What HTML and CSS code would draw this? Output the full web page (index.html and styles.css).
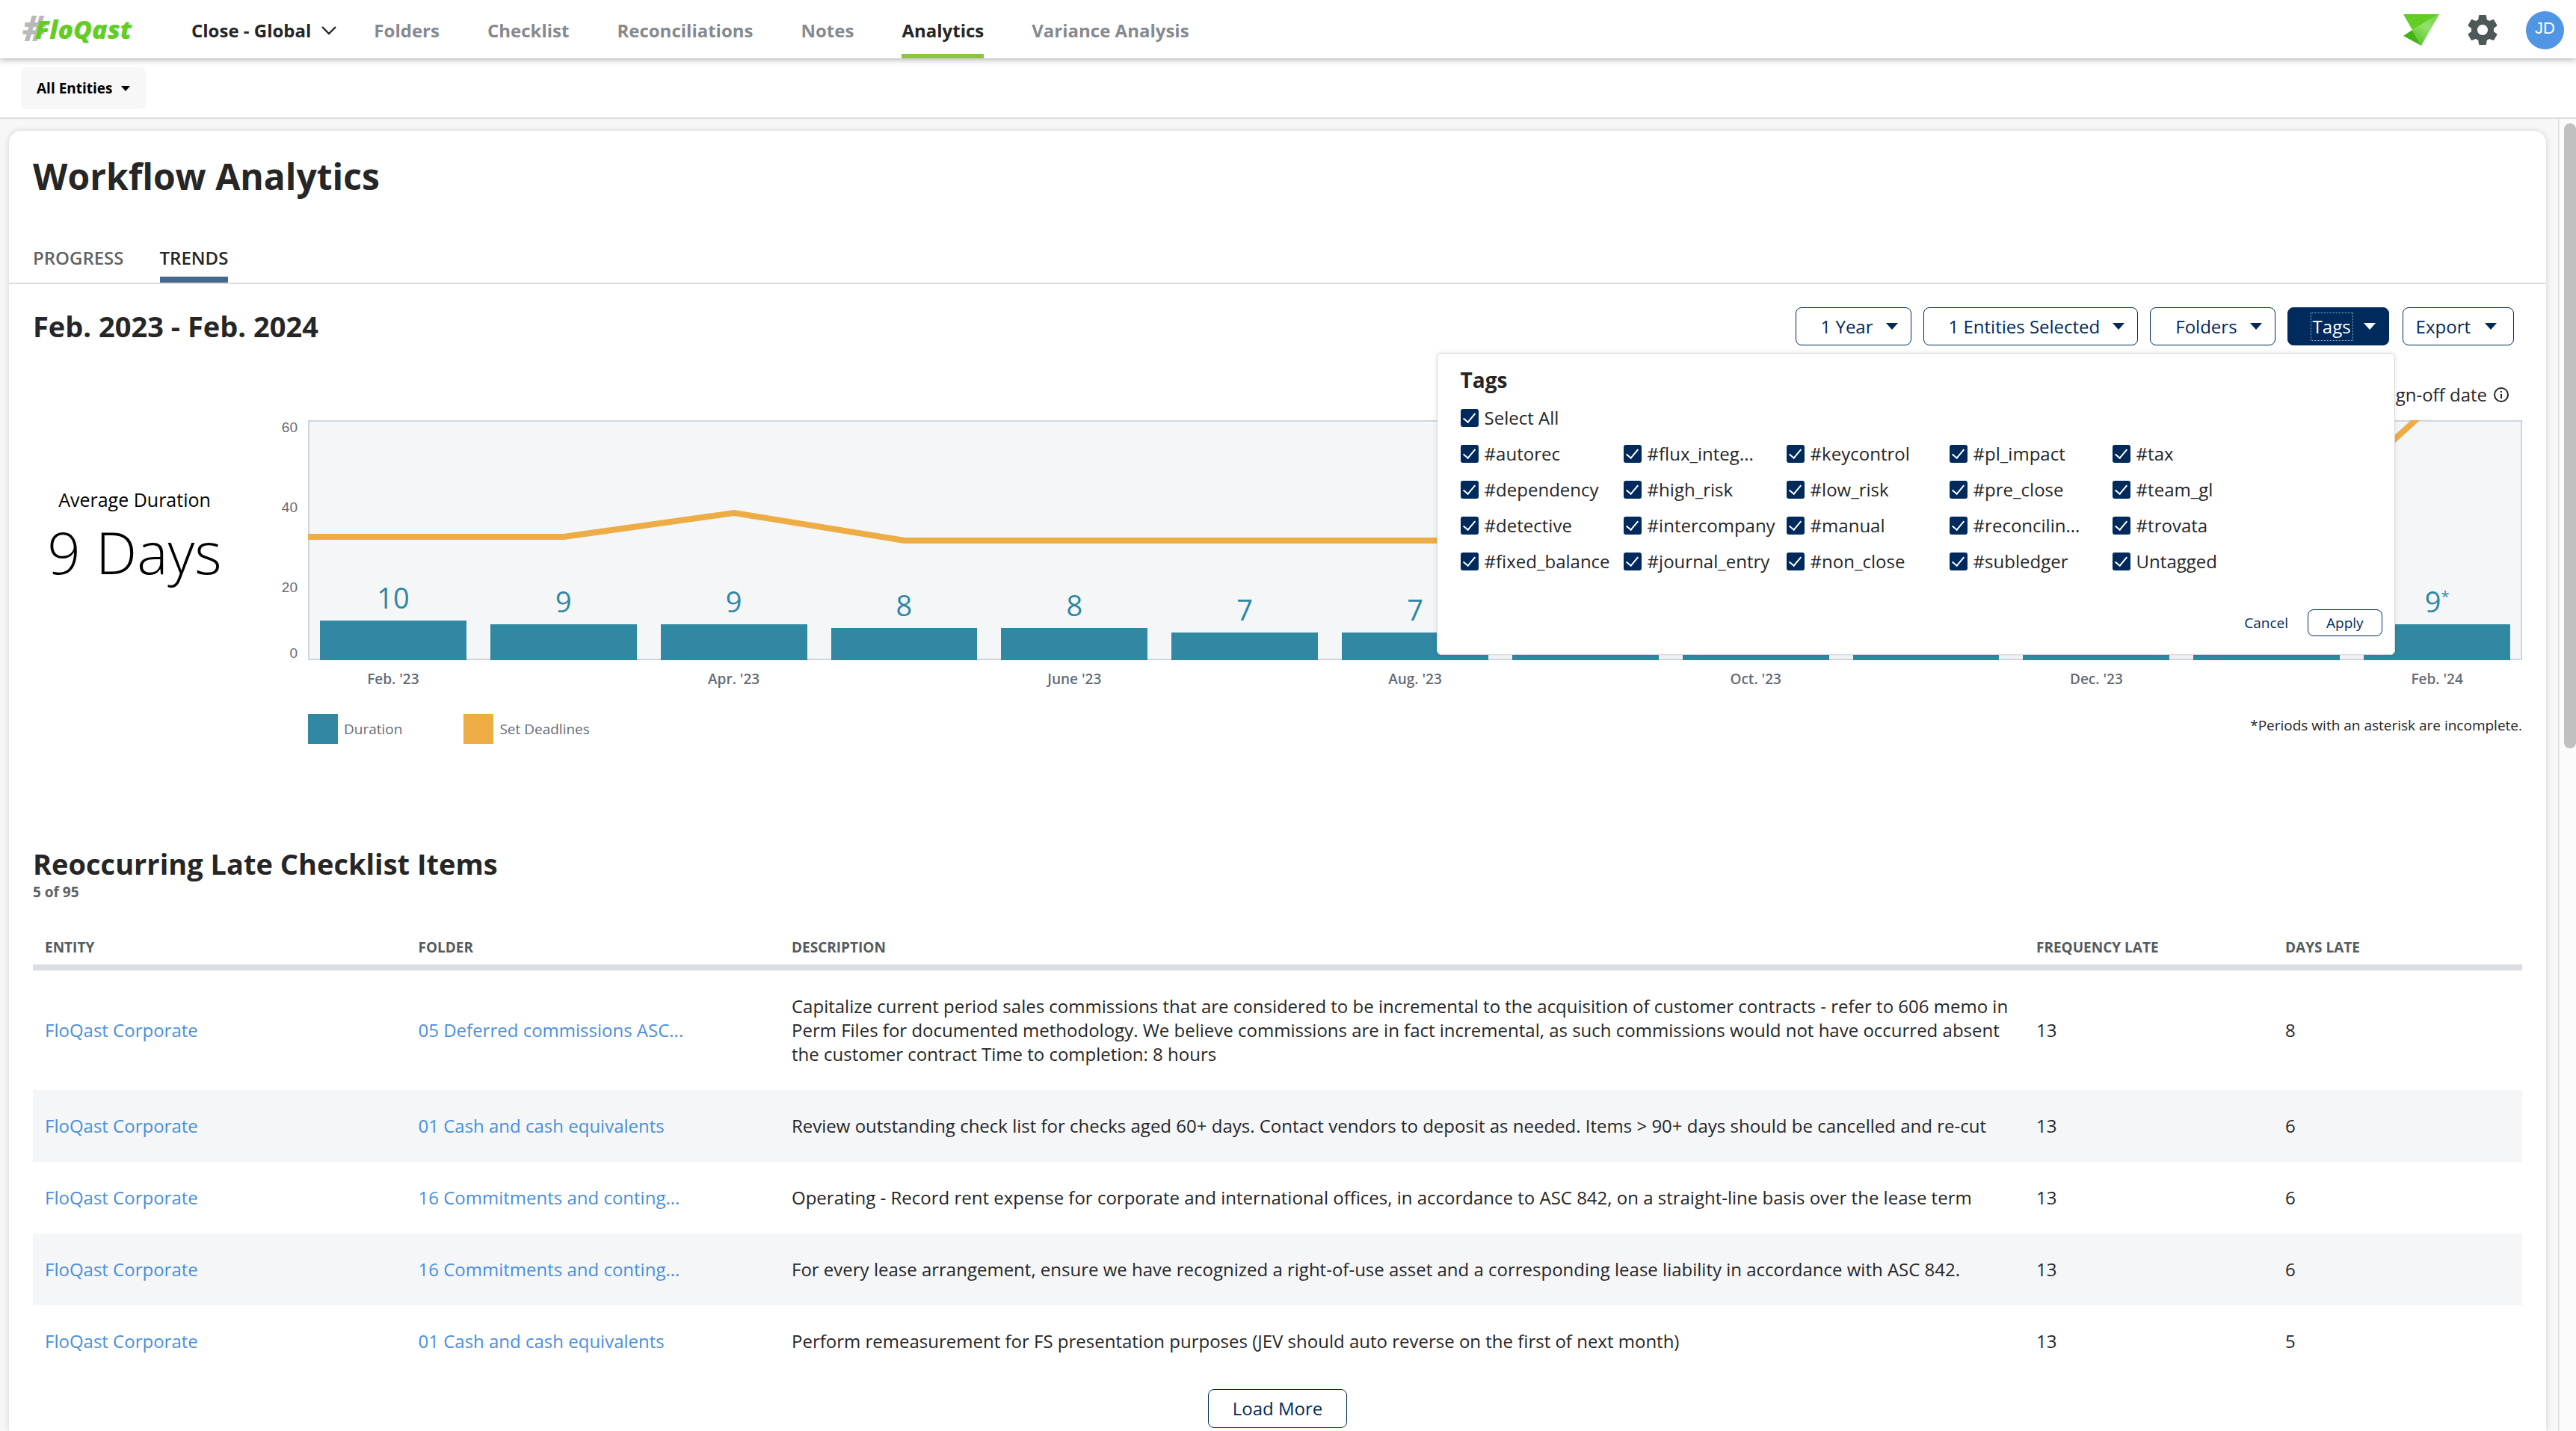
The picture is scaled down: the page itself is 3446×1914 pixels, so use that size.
FILE: index.html
```html
<!DOCTYPE html>
<html lang="en">
<head>
<meta charset="utf-8">
<title>Workflow Analytics</title>
<link rel="stylesheet" href="styles.css">
</head>
<body>
<header class="topbar">
  <a class="logo" href="#" aria-label="FloQast"><span class="logo-hash">#</span><span class="logo-name">FloQast</span></a>
  <button class="workspace" type="button">Close - Global
    <svg width="20" height="12" viewBox="0 0 20 12" fill="none" stroke="currentColor" stroke-width="2.4"><path d="M1 1l9 9 9-9"/></svg>
  </button>
  <nav class="nav">
    <a href="#">Folders</a>
    <a href="#">Checklist</a>
    <a href="#">Reconciliations</a>
    <a href="#">Notes</a>
    <a href="#" class="active">Analytics</a>
    <a href="#">Variance Analysis</a>
  </nav>
  <div class="tools">
    <svg class="bird" width="48" height="42" viewBox="0 0 48 42">
      <defs><linearGradient id="wing" x1="1" y1="0" x2="0.3" y2="1"><stop offset="0" stop-color="#6fcf3c"/><stop offset="0.5" stop-color="#93e26e"/><stop offset="1" stop-color="#5cc42b"/></linearGradient></defs>
      <path d="M0 0h48L12 21z" fill="#62cd23"/>
      <path d="M0 29l12-8 12 21z" fill="#43b314"/>
      <path d="M48 0L12 21l12 21z" fill="url(#wing)"/>
    </svg>
    <svg class="gear" width="48" height="48" viewBox="0 0 24 24" fill="#4d5858"><path d="M19.43 12.98c.04-.32.07-.64.07-.98s-.03-.66-.07-.98l2.11-1.65c.19-.15.24-.42.12-.64l-2-3.46c-.12-.22-.39-.3-.61-.22l-2.49 1c-.52-.4-1.08-.73-1.69-.98l-.38-2.65C14.46 2.18 14.25 2 14 2h-4c-.25 0-.46.18-.49.42l-.38 2.65c-.61.25-1.17.59-1.69.98l-2.49-1c-.23-.09-.49 0-.61.22l-2 3.46c-.13.22-.07.49.12.64l2.11 1.65c-.04.32-.07.65-.07.98s.03.66.07.98l-2.11 1.65c-.19.15-.24.42-.12.64l2 3.46c.12.22.39.3.61.22l2.49-1c.52.4 1.08.73 1.69.98l.38 2.65c.03.24.24.42.49.42h4c.25 0 .46-.18.49-.42l.38-2.65c.61-.25 1.17-.59 1.69-.98l2.49 1c.23.09.49 0 .61-.22l2-3.46c.12-.22.07-.49-.12-.64l-2.11-1.65zM12 15.5c-1.93 0-3.5-1.57-3.5-3.5s1.57-3.5 3.5-3.5 3.5 1.57 3.5 3.5-1.57 3.5-3.5 3.5z"/></svg>
    <span class="avatar">JD</span>
  </div>
</header>

<div class="entity-bar">
  <button class="entity-button" type="button">All Entities <span class="caret caret-small"></span></button>
</div>

<div class="viewport">
<main class="card">
  <h1>Workflow Analytics</h1>
  <nav class="tabs">
    <a href="#">PROGRESS</a>
    <a href="#" class="active">TRENDS</a>
  </nav>

  <section class="trends">
    <div class="toolbar">
      <h2>Feb. 2023 - Feb. 2024</h2>
      <div class="filters">
        <button class="filter" type="button">1 Year <span class="caret"></span></button>
        <button class="filter" type="button">1 Entities Selected <span class="caret"></span></button>
        <button class="filter" type="button">Folders <span class="caret"></span></button>
        <div class="tags-filter">
          <button class="filter open" type="button" aria-expanded="true"><span class="focus-text">Tags</span><span class="caret"></span></button>
          <form class="tags-menu">
            <h3>Tags</h3>
            <label class="tick"><input type="checkbox" checked>Select All</label>
            <div class="tag-grid">
              <label class="tick"><input type="checkbox" checked>#autorec</label>
              <label class="tick"><input type="checkbox" checked>#dependency</label>
              <label class="tick"><input type="checkbox" checked>#detective</label>
              <label class="tick"><input type="checkbox" checked>#fixed_balance</label>
              <label class="tick"><input type="checkbox" checked>#flux_integ...</label>
              <label class="tick"><input type="checkbox" checked>#high_risk</label>
              <label class="tick"><input type="checkbox" checked>#intercompany</label>
              <label class="tick"><input type="checkbox" checked>#journal_entry</label>
              <label class="tick"><input type="checkbox" checked>#keycontrol</label>
              <label class="tick"><input type="checkbox" checked>#low_risk</label>
              <label class="tick"><input type="checkbox" checked>#manual</label>
              <label class="tick"><input type="checkbox" checked>#non_close</label>
              <label class="tick"><input type="checkbox" checked>#pl_impact</label>
              <label class="tick"><input type="checkbox" checked>#pre_close</label>
              <label class="tick"><input type="checkbox" checked>#reconcilin...</label>
              <label class="tick"><input type="checkbox" checked>#subledger</label>
              <label class="tick"><input type="checkbox" checked>#tax</label>
              <label class="tick"><input type="checkbox" checked>#team_gl</label>
              <label class="tick"><input type="checkbox" checked>#trovata</label>
              <label class="tick"><input type="checkbox" checked>Untagged</label>
            </div>
            <div class="menu-actions">
              <button class="cancel" type="button">Cancel</button>
              <button class="apply" type="button">Apply</button>
            </div>
          </form>
        </div>
        <button class="filter export" type="button">Export <span class="caret"></span></button>
      </div>
    </div>

    <p class="basis">sign-off date
      <svg width="22" height="22" viewBox="0 0 22 22" fill="none" stroke="#262626" stroke-width="2"><circle cx="11" cy="11" r="9"/><path d="M11 10v6M11 6v2"/></svg>
    </p>

    <div class="chart-row">
      <div class="average">
        <span class="average-label">Average Duration</span>
        <span class="average-value">9 Days</span>
      </div>
      <div class="y-axis"><span>60</span><span>40</span><span>20</span><span>0</span></div>
      <div class="chart">
        <div class="plot">
          <svg class="deadlines" viewBox="0 0 2962 321" preserveAspectRatio="none"><polyline points="0,156 342,156 570,124 798,161 2392,161 2620,181 2848,-26" fill="none" stroke="#eeac45" stroke-width="8"/></svg>
          <div class="bar-slot"><span class="bar-value">10</span><div class="bar" style="height:53px"></div></div>
          <div class="bar-slot"><span class="bar-value">9</span><div class="bar" style="height:48px"></div></div>
          <div class="bar-slot"><span class="bar-value">9</span><div class="bar" style="height:48px"></div></div>
          <div class="bar-slot"><span class="bar-value">8</span><div class="bar" style="height:43px"></div></div>
          <div class="bar-slot"><span class="bar-value">8</span><div class="bar" style="height:43px"></div></div>
          <div class="bar-slot"><span class="bar-value">7</span><div class="bar" style="height:37px"></div></div>
          <div class="bar-slot"><span class="bar-value">7</span><div class="bar" style="height:37px"></div></div>
          <div class="bar-slot"><div class="bar" style="height:37px"></div></div>
          <div class="bar-slot"><div class="bar" style="height:37px"></div></div>
          <div class="bar-slot"><div class="bar" style="height:37px"></div></div>
          <div class="bar-slot"><div class="bar" style="height:37px"></div></div>
          <div class="bar-slot"><div class="bar" style="height:37px"></div></div>
          <div class="bar-slot"><span class="bar-value">9<sup>*</sup></span><div class="bar" style="height:48px"></div></div>
        </div>
        <div class="x-axis">
          <span>Feb. '23</span><span></span><span>Apr. '23</span><span></span><span>June '23</span><span></span><span>Aug. '23</span><span></span><span>Oct. '23</span><span></span><span>Dec. '23</span><span></span><span>Feb. '24</span>
        </div>
        <div class="legend">
          <span class="key"><i class="swatch teal"></i>Duration</span>
          <span class="key"><i class="swatch amber"></i>Set Deadlines</span>
          <span class="footnote">*Periods with an asterisk are incomplete.</span>
        </div>
      </div>
    </div>
  </section>

  <section class="late">
    <h2>Reoccurring Late Checklist Items</h2>
    <p class="count">5 of 95</p>
    <table>
      <colgroup><col class="c-name"><col class="c-name"><col class="c-desc"><col class="c-num"><col class="c-num"></colgroup>
      <thead><tr><th>ENTITY</th><th>FOLDER</th><th>DESCRIPTION</th><th>FREQUENCY LATE</th><th>DAYS LATE</th></tr></thead>
      <tbody>
        <tr><td><a href="#">FloQast Corporate</a></td><td><a href="#">05 Deferred commissions ASC...</a></td><td>Capitalize current period sales commissions that are considered to be incremental to the acquisition of customer contracts - refer to 606 memo in Perm Files for documented methodology. We believe commissions are in fact incremental, as such commissions would not have occurred absent the customer contract Time to completion: 8 hours</td><td>13</td><td>8</td></tr>
        <tr><td><a href="#">FloQast Corporate</a></td><td><a href="#">01 Cash and cash equivalents</a></td><td>Review outstanding check list for checks aged 60+ days. Contact vendors to deposit as needed. Items &gt; 90+ days should be cancelled and re-cut</td><td>13</td><td>6</td></tr>
        <tr><td><a href="#">FloQast Corporate</a></td><td><a href="#">16 Commitments and conting...</a></td><td>Operating - Record rent expense for corporate and international offices, in accordance to ASC 842, on a straight-line basis over the lease term</td><td>13</td><td>6</td></tr>
        <tr><td><a href="#">FloQast Corporate</a></td><td><a href="#">16 Commitments and conting...</a></td><td>For every lease arrangement, ensure we have recognized a right-of-use asset and a corresponding lease liability in accordance with ASC 842.</td><td>13</td><td>6</td></tr>
        <tr><td><a href="#">FloQast Corporate</a></td><td><a href="#">01 Cash and cash equivalents</a></td><td>Perform remeasurement for FS presentation purposes (JEV should auto reverse on the first of next month)</td><td>13</td><td>5</td></tr>
      </tbody>
    </table>
    <div class="more"><button class="load-more" type="button">Load More</button></div>
  </section>
</main>
<div class="scroll-track"><div class="scroll-thumb"></div></div>
</div>
</body>
</html>
```
FILE: styles.css
```css
* { box-sizing: border-box; }

body {
  margin: 0;
  height: 100vh;
  overflow: hidden;
  display: flex;
  flex-direction: column;
  font-family: "Open Sans", "Noto Sans", sans-serif;
  font-size: 24px;
  line-height: 32px;
  color: #262626;
  background: #f7f7f7;
}

h1, h2, h3, p { margin: 0; }
a { color: inherit; text-decoration: none; }
button { font: inherit; color: inherit; background: none; border: 0; padding: 0; cursor: pointer; }

/* Top navigation */
.topbar {
  position: relative;
  z-index: 2;
  flex: none;
  height: 78px;
  display: flex;
  align-items: center;
  padding: 0 16px 0 30px;
  background: #fff;
  box-shadow: 0 2px 8px rgba(0, 0, 0, 0.3);
}

.logo {
  width: 226px;
  display: flex;
  align-items: center;
  font-style: italic;
  white-space: nowrap;
}
.logo-hash { font-size: 48px; font-weight: 800; color: #b9b9b9; margin-right: -14px; padding-bottom: 4px; }
.logo-name { font-size: 34px; font-weight: 800; color: #62cd23; }

.workspace { display: flex; align-items: center; gap: 14px; font-weight: 700; margin-right: 50px; padding-top: 4px; }

.nav { display: flex; gap: 64px; align-self: stretch; }
.nav a {
  display: flex;
  align-items: center;
  padding-top: 10px;
  border-bottom: 6px solid transparent;
  font-weight: 700;
  color: #868a8e;
}
.nav a.active { color: #262626; border-bottom-color: #8ac441; }

.tools { margin-left: auto; padding-top: 2px; display: flex; align-items: center; gap: 34px; }
.avatar {
  width: 51px;
  height: 51px;
  border-radius: 50%;
  background: #5195e5;
  color: #fff;
  font: 22px/46px "Liberation Sans", sans-serif;
  text-align: center;
}

/* Entity bar */
.entity-bar {
  flex: none;
  height: 81px;
  padding: 12px 28px;
  background: #fff;
  border-bottom: 2px solid #ddd;
}
.entity-button {
  display: flex;
  align-items: center;
  gap: 11px;
  height: 56px;
  padding: 0 21px;
  border-radius: 8px;
  background: #f7f7f7;
  color: #000;
  font-size: 19px;
  font-weight: 700;
}

.caret {
  border: 8px solid transparent;
  border-top: 9px solid currentColor;
  border-bottom: 0;
}
.caret-small { border-width: 7px 6px 0; }

/* Page */
.viewport { flex: 1; min-height: 0; display: flex; gap: 16px; }
.card {
  flex: 1;
  margin: 16px 0 0 12px;
  padding: 28px 32px 0;
  border-radius: 16px 16px 0 0;
  background: #fff;
  box-shadow: 0 0 8px rgba(0, 0, 0, 0.15);
}
.scroll-track { width: 24px; padding: 6px 0 0 6px; background: #fbfbfb; border-left: 2px solid #e4e4e4; }
.scroll-thumb { height: 836px; border-radius: 8px; background: #c0c0c0; }

h1 { font-size: 48px; line-height: 66px; font-weight: 700; }
h2 { font-size: 38px; line-height: 50px; font-weight: 700; }

.tabs {
  display: flex;
  gap: 48px;
  margin: 60px -32px 0;
  padding: 0 32px;
  border-bottom: 2px solid #ddd;
}
.tabs a { padding-bottom: 9px; border-bottom: 8px solid transparent; font-weight: 600; color: #5f6366; }
.tabs a.active { color: #262626; border-bottom-color: #45688e; }

/* Filters */
.toolbar { display: flex; justify-content: space-between; padding-top: 31px; }
.filters { display: flex; gap: 16px; padding-right: 11px; }
.filter {
  display: flex;
  align-items: center;
  gap: 17px;
  height: 51px;
  padding: 0 17px 0 33px;
  border: 1px solid #002a5c;
  border-radius: 8px;
  color: #002a5c;
}
.filter.open { background: #002a5c; color: #fff; }
.focus-text { outline: 1px dotted #9db4d0; outline-offset: 2px; }
.filter.export { padding: 0 22px 0 17px; gap: 19px; margin-left: 2px; }
.tags-filter { position: relative; }

.tags-menu {
  position: absolute;
  z-index: 3;
  top: 61px;
  right: -8px;
  width: 1282px;
  height: 404px;
  padding: 16px;
  padding-left: 31px;
  display: flex;
  flex-direction: column;
  background: #fff;
  border: 1px solid #d8d8d8;
  border-radius: 6px;
  box-shadow: 0 0 6px rgba(0, 0, 0, 0.1);
}
.tags-menu h3 { font-size: 28px; line-height: 38px; margin-bottom: 16px; }
.tick { display: flex; align-items: center; gap: 8px; height: 32px; white-space: nowrap; }
.tick input {
  appearance: none;
  width: 24px;
  height: 24px;
  margin: 0;
  flex: none;
  border-radius: 3px;
  background: #002a5c;
  display: grid;
  place-items: center;
}
.tick input::before {
  content: "";
  width: 7px;
  height: 14px;
  margin-bottom: 4px;
  border: solid #fff;
  border-width: 0 2px 2px 0;
  transform: rotate(40deg);
}
.tag-grid {
  display: grid;
  grid-auto-flow: column;
  grid-template-rows: repeat(4, 32px);
  grid-template-columns: repeat(5, 218px);
  row-gap: 16px;
  margin-top: 16px;
}
.menu-actions {
  display: flex;
  justify-content: flex-end;
  align-items: center;
  gap: 26px;
  margin-top: auto;
  margin-bottom: 8px;
  font-size: 19px;
  color: #002a5c;
}
.apply { height: 36px; padding: 0 24px; border: 1px solid #002a5c; border-radius: 8px; }

.basis {
  display: flex;
  justify-content: flex-end;
  align-items: center;
  gap: 8px;
  padding-right: 17px;
  margin: 50px 0 18px;
}

/* Chart */
.chart-row { display: flex; }
.average { width: 272px; padding-top: 88px; text-align: center; color: #000; }
.average-label { display: block; font-size: 25px; line-height: 36px; }
.average-value { display: block; font-size: 78px; line-height: 104px; font-weight: 300; white-space: nowrap; }
.y-axis {
  width: 96px;
  padding-right: 14px;
  display: grid;
  grid-template-rows: 107px 107px 88px 20px;
  text-align: right;
  font: 19px/20px "Liberation Sans", sans-serif;
  color: #666b75;
}
.chart { flex: 1; }
.plot {
  position: relative;
  height: 321px;
  display: grid;
  grid-template-columns: repeat(13, 1fr);
  background: #f4f6f8;
  box-shadow: inset 0 0 0 2px #ccd6e4;
}
.deadlines { position: absolute; width: 100%; height: 100%; }
.bar-slot {
  display: flex;
  flex-direction: column;
  justify-content: flex-end;
  gap: 5px;
  padding: 0 16px;
}
.bar { background: #3088a2; }
.bar-value { font-size: 38px; line-height: 52px; text-align: center; color: #3088a2; }
.bar-value sup { font-size: 20px; line-height: 0; }
.x-axis {
  display: grid;
  grid-template-columns: repeat(13, 1fr);
  padding-top: 12px;
  line-height: 26px;
  font-size: 19px;
  font-weight: 600;
  text-align: center;
  color: #666b75;
}
.legend { display: flex; align-items: center; gap: 82px; margin-top: 33px; font-size: 19px; color: #666b75; }
.key { display: flex; align-items: center; gap: 8px; }
.swatch { width: 40px; height: 40px; }
.teal { background: #3088a2; }
.amber { background: #eeac45; }
.footnote { margin-left: auto; padding-bottom: 10px; color: #262626; }

/* Late items */
.late { padding-top: 134px; }
.count { font-size: 19px; line-height: 26px; font-weight: 700; color: #5f6366; }
table { width: 100%; table-layout: fixed; border-collapse: collapse; margin-top: 45px; }
.c-name { width: 15%; }
.c-desc { width: 50%; }
.c-num { width: 10%; }
th {
  padding: 0 16px 7px;
  border-bottom: 8px solid #dadee2;
  text-align: left;
  font-size: 19px;
  font-weight: 700;
  color: #555b5e;
}
td { padding: 32px 16px; }
tbody tr:nth-child(even) { background: #f4f6f8; }
td a { color: #4a8fdc; }
.more { display: flex; justify-content: center; padding-top: 16px; }
.load-more { height: 52px; padding: 0 32px; border: 1px solid #002a5c; border-radius: 8px; color: #002a5c; }
```
